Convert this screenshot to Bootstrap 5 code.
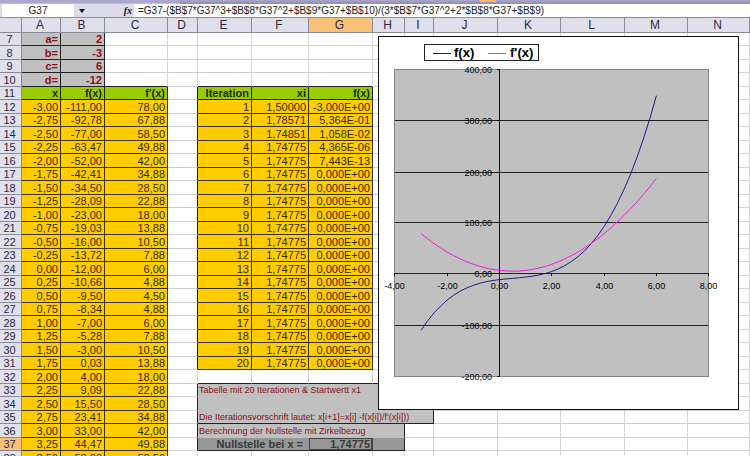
<!DOCTYPE html>
<html lang="de">
<head>
<meta charset="utf-8">
<meta name="viewport" content="width=device-width, initial-scale=1">
<title>Newton-Verfahren</title>
<link href="https://cdn.jsdelivr.net/npm/bootstrap@5.3.0/dist/css/bootstrap.min.css" rel="stylesheet">
<style>
body { font-family: "Liberation Sans", Arial, sans-serif; font-size: 11px; color: #000; }
.topstrip { height: 4px; background: linear-gradient(#aaa6c8, #8f8bb2); }
.topstrip-left { width: 180px; background: linear-gradient(#aaa6cc 60%, #c8c6dc); }
.topstrip-gap { width: 300px; }
.topstrip-mark { width: 16px; height: 2px; background: #f9b768; }
.formulabar { height: 14px; background: #dcdbea; padding-left: 2px; border-bottom: 1px solid #8c8c9c; }
.formulabar input { height: 13px; font-size: 10px; line-height: 13px; background: #fff; color: #222; }
.namebox { width: 72px; padding: 0; }
.tools { width: 60px; padding: 0 2px 0 4px; }
.tools button { height: 13px; line-height: 11px; color: #111; }
.fxbtn { font: italic bold 10px "Liberation Serif", serif; }
.formula { padding: 0 4px; min-width: 0; }
.sheet { table-layout: fixed; border-collapse: separate; border-spacing: 0; line-height: 12px; }
.sheet th, .sheet td { padding: 0 2px 0 0; height: 14px; text-align: right; white-space: nowrap; overflow: hidden;
  border-right: 1px solid #d4d4d4; border-bottom: 1px solid #d0d0d0; }
.sheet tbody tr:nth-child(odd) > * { height: 13px; }
.sheet thead th { height: 15px; line-height: 14px; font-size: 12px; }
.sheet .head { background: #e0dfec; border-color: #8a8a96; text-align: center; font-weight: 400; color: #2a2a3c; }
.sheet .hot { background: #fbc077; }
.sheet .val { background: #fc0; border-color: #3a3000; color: #352b00; }
.sheet .ttl { background: #9c0; border-color: #1c2600; color: #1b2a00; font-weight: 700; }
.sheet .coef { background: #c0c0c0; border-color: #222; color: #8c1018; font-weight: 700; }
.sheet .edge { border-right-color: #222; }
.sheet .under { border-bottom-color: #222; }
.sheet .note { background: #c0c0c0; color: #8c1018; font-size: 9px; text-align: left; padding-left: 1px; border-color: #c0c0c0; }
.sheet .note.closed { border-bottom-color: #222; }
.sheet .note, .sheet .rim { border-right-color: #222; }
.sheet .res { background: #969696; border-color: #969696 #969696 #222; color: #383838; font-weight: 700; }
.sheet .res-label { padding-right: 5px; }
.sheet .active { box-shadow: inset 0 0 0 1px #444; border-right-color: #444; }
.sheet .res.rim { border-right-color: #222; }
.chartbox { left: 378px; top: 18px; width: 361px; height: 374px; background: #fff; border: 1px solid #111; }
.chartbox text { font-size: 9px; fill: #000; }
.chartbox .key { font-size: 13px; font-weight: 700; }
</style>
</head>
<body class="bg-white">
<div class="vh-100 overflow-hidden d-flex flex-column">
  <div class="topstrip d-flex flex-shrink-0"><div class="topstrip-left"></div><div class="topstrip-gap"></div><div class="topstrip-mark"></div></div>
  <div class="formulabar d-flex flex-shrink-0">
    <input class="namebox border-0 text-center" type="text" value="G37" aria-label="Namenfeld">
    <div class="tools d-flex justify-content-between align-items-center">
      <button class="border-0 bg-transparent p-0 d-flex align-items-center" type="button" aria-label="Namen anzeigen"><svg width="7" height="4"><path d="M1 0h6L4 4z" fill="#111"/></svg></button>
      <button class="fxbtn border-0 bg-transparent p-0" type="button" aria-label="Funktion einfügen">fx</button>
    </div>
    <input class="formula border-0 flex-grow-1" type="text" aria-label="Formel" value="=G37-($B$7*G37^3+$B$8*G37^2+$B$9*G37+$B$10)/(3*$B$7*G37^2+2*$B$8*G37+$B$9)">
  </div>
  <div class="position-relative">
    <table class="sheet w-100">
      <colgroup id="cols"></colgroup>
      <thead><tr id="letters"></tr></thead>
      <tbody id="cells"></tbody>
    </table>
    <div class="chartbox position-absolute">
      <svg id="chart" class="d-block" width="359" height="372" viewBox="379 37 359 372" role="img" aria-label="f(x) und f'(x)"></svg>
    </div>
  </div>
</div>
<script>
const widths = [22, 39, 44, 63, 30, 54, 57, 64, 32, 29, 64, 63, 64, 63, 0];
document.getElementById('cols').innerHTML = widths.map(w => w ? `<col style="width:${w}px">` : '<col>').join('');
document.getElementById('letters').innerHTML = ['', ...'ABCDEFGHIJKLMN']
  .map(c => `<th class="head${c === 'G' ? ' hot' : ''}" scope="col">${c}</th>`).join('');

const f = x => 2 * x ** 3 - 3 * x ** 2 + 6 * x - 12;
const df = x => 6 * x ** 2 - 6 * x + 6;
const num = v => v.toFixed(2).replace('.', ',');
const cell = (text, cls = '', span = 1) =>
  `<td${cls ? ` class="${cls}"` : ''}${span > 1 ? ` colspan="${span}"` : ''}>${text}</td>`;
const blanks = n => cell('').repeat(n);
const coefs = [['a=', 2], ['b=', -3], ['c=', 6], ['d=', -12]];
const xi = ['1,50000', '1,78571', '1,74851'];
const fx = ['-3,000E+00', '5,364E-01', '1,058E-02', '4,365E-06', '7,443E-13'];
const notes = { 33: 'Tabelle mit 20 Iterationen &amp; Startwertt x1', 34: '', 35: "Die Iterationsvorschrift lautet: x[i+1]=x[i] -f(x[i])/f'(x[i]))" };

let rows = '';
for (let r = 7; r <= 38; r++) {
  let row = `<th class="head${r === 37 ? ' hot' : ''}" scope="row">${r}</th>`;
  if (r < 11) {
    row += cell(coefs[r - 7][0], 'coef') + cell(coefs[r - 7][1], 'coef') + cell('', r === 10 ? 'under' : '') + cell('');
  } else if (r === 11) {
    row += cell('x', 'ttl') + cell('f(x)', 'ttl') + cell("f'(x)", 'ttl') + cell('', 'edge');
  } else {
    const x = -3 + (r - 12) * 0.25;
    row += cell(num(x), 'val') + cell(num(f(x)), 'val') + cell(num(df(x)), 'val')
      + cell('', r < 32 || (r > 32 && r < 38) ? 'edge' : '');
  }
  if (r === 11) {
    row += cell('Iteration', 'ttl') + cell('xi', 'ttl') + cell('f(x)', 'ttl') + blanks(7);
  } else if (r > 11 && r < 32) {
    const i = r - 12;
    row += cell(i + 1, 'val') + cell(xi[i] || '1,74775', 'val') + cell(fx[i] || '0,000E+00', 'val') + blanks(7);
  } else if (r in notes) {
    row += cell(notes[r], r === 35 ? 'note closed' : 'note', 5) + blanks(5);
  } else if (r === 36) {
    row += cell('Berechnung der Nullstelle mit Zirkelbezug', 'note', 4) + blanks(6);
  } else if (r === 37) {
    row += cell('Nullstelle bei x =', 'res res-label', 2) + cell('1,74775', 'res active') + cell('', 'res rim') + blanks(6);
  } else if (r === 10) {
    row += cell('', 'under').repeat(3) + blanks(7);
  } else if (r === 32) {
    row += cell('', 'under').repeat(5) + blanks(5);
  } else {
    row += blanks(10);
  }
  rows += `<tr>${row}</tr>`;
}
document.getElementById('cells').innerHTML = rows;

const px = x => 499.5 + x * 26.15;
const py = y => 273.5 - y * 0.511;
const curve = (fn, colour) => {
  const pts = [];
  for (let x = -3; x <= 6; x += 0.25) pts.push(px(x).toFixed(1) + ',' + py(fn(x)).toFixed(1));
  return `<polyline points="${pts.join(' ')}" fill="none" stroke="${colour}"/>`;
};
let g = '<rect x="394.5" y="69.5" width="314" height="307" fill="#c0c0c0" stroke="#868686"/>';
for (const y of [120, 172, 222, 273, 325]) g += `<path d="M395 ${y}.5H708" stroke="#222"/>`;
g += '<path d="M499.5 69V377" stroke="#111"/>';
[400, 300, 200, 100, 0, -100, -200].forEach((v, i) => {
  const y = [69, 120, 172, 222, 273, 325, 376][i];
  g += `<path d="M497 ${y}.5h3" stroke="#111"/><text x="492" y="${y + 4}" text-anchor="end">${num(v)}</text>`;
});
for (let v = -4; v <= 8; v += 2) {
  const x = Math.round(px(v) - 0.5) + 0.5;
  g += `<path d="M${x} 273v3" stroke="#111"/><text x="${x}" y="289" text-anchor="middle">${num(v)}</text>`;
}
g += curve(f, '#1c1c80') + curve(df, '#f01ce0');
g += '<rect x="424.5" y="44.5" width="114" height="16" fill="#fff" stroke="#222"/>'
  + '<path d="M433 53.5h18" stroke="#1c1c80"/><text class="key" x="454" y="57">f(x)</text>'
  + '<path d="M488 53.5h18" stroke="#e040d8"/><text class="key" x="510" y="57">f\'(x)</text>';
document.getElementById('chart').innerHTML = g;
</script>
<script src="https://cdn.jsdelivr.net/npm/bootstrap@5.3.0/dist/js/bootstrap.bundle.min.js"></script>
</body>
</html>
